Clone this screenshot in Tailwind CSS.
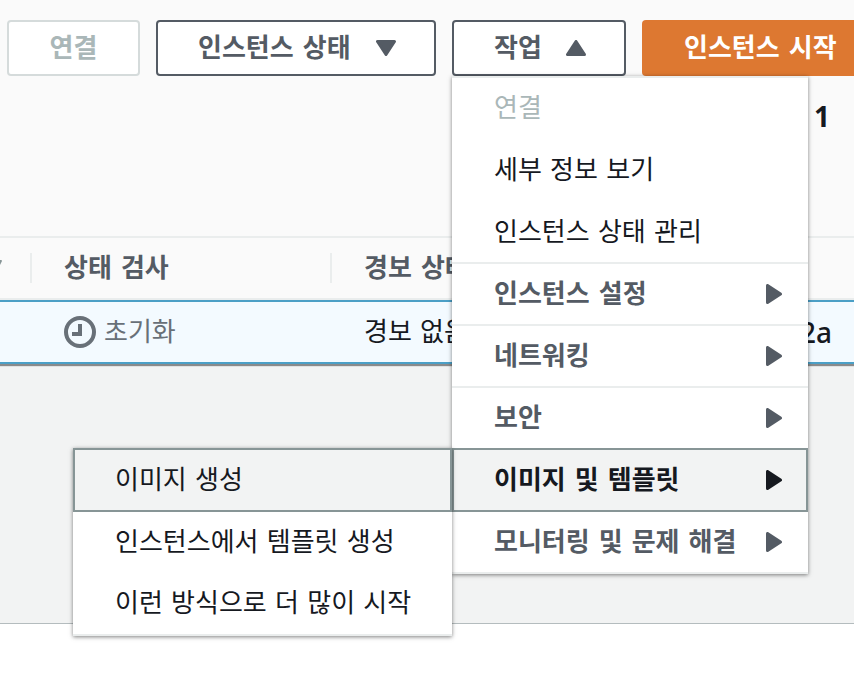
<!DOCTYPE html>
<html lang="ko">
<head>
<meta charset="utf-8">
<title>인스턴스</title>
<script src="https://cdn.jsdelivr.net/npm/@tailwindcss/browser@4"></script>
</head>
<body class="min-h-screen overflow-hidden bg-white font-['DejaVu_Sans','Noto_Sans_CJK_KR',sans-serif] text-[26px] leading-8 text-[#16191f]">
<svg class="hidden">
  <symbol id="down" viewBox="0 0 20 16"><path d="M1.5 1.5h17L10 14.5z" fill="currentColor" stroke="currentColor" stroke-width="3" stroke-linejoin="round"/></symbol>
  <symbol id="up" viewBox="0 0 20 16"><path d="M1.5 14.5h17L10 1.5z" fill="currentColor" stroke="currentColor" stroke-width="3" stroke-linejoin="round"/></symbol>
  <symbol id="right" viewBox="0 0 16 20"><path d="M1.5 1.5v17L14.5 10z" fill="currentColor" stroke="currentColor" stroke-width="3" stroke-linejoin="round"/></symbol>
</svg>
<main class="border-b border-[#b4bcbe] bg-[#f2f3f3] pb-[259px]">
  <section class="bg-[#fafafa] shadow-[0_2px_1px_#8a8a8a]">
    <header class="h-[236px] pt-5">
      <div class="flex gap-4 pl-[7px] font-bold whitespace-nowrap text-[#545b64]">
        <button disabled class="h-14 w-[133px] shrink-0 rounded border-2 border-[#d5dbdb] bg-white text-[#aab7b8]">연결</button>
        <button class="flex h-14 w-[280px] shrink-0 items-center justify-between rounded border-2 border-[#545b64] bg-white pr-[38px] pl-10">인스턴스 상태 <svg class="h-4 w-5"><use href="#down"/></svg></button>
        <div class="relative shrink-0">
          <button aria-expanded="true" class="flex h-14 w-[174px] items-center justify-between rounded border-2 border-[#545b64] bg-white pr-[38px] pl-10">작업 <svg class="h-4 w-5"><use href="#up"/></svg></button>
          <ul class="absolute top-full left-0 z-10 w-[356px] border-t-2 border-[#eaeded] bg-white shadow-[0_1px_4px_#00000080]">
            <li class="-mt-0.5"><button disabled class="h-16 w-full px-[42px] text-left font-normal text-[#aab7b8]">연결</button></li>
            <li class="-mt-0.5"><button class="h-16 w-full px-[42px] text-left font-normal text-[#16191f]">세부 정보 보기</button></li>
            <li class="-mt-0.5"><button class="h-16 w-full px-[42px] text-left font-normal text-[#16191f]">인스턴스 상태 관리</button></li>
            <li class="-mt-0.5 border-t-2 border-[#eaeded]"><button class="flex h-[62px] w-full items-center justify-between pr-[26px] pb-0.5 pl-[42px]">인스턴스 설정 <svg class="h-5 w-4"><use href="#right"/></svg></button></li>
            <li class="-mt-0.5 border-t-2 border-[#eaeded]"><button class="flex h-[62px] w-full items-center justify-between pr-[26px] pb-0.5 pl-[42px]">네트워킹 <svg class="h-5 w-4"><use href="#right"/></svg></button></li>
            <li class="-mt-0.5 border-t-2 border-[#eaeded]"><button class="flex h-[62px] w-full items-center justify-between pr-[26px] pb-0.5 pl-[42px]">보안 <svg class="h-5 w-4"><use href="#right"/></svg></button></li>
            <li class="relative -mt-0.5">
              <button aria-expanded="true" class="flex h-16 w-full items-center justify-between border-2 border-[#879596] bg-[#f2f3f3] pr-6 pl-10 text-[#16191f]">이미지 및 템플릿 <svg class="h-5 w-4"><use href="#right"/></svg></button>
              <ul class="absolute top-0 right-full w-[379px] border-b-2 border-[#eaeded] bg-white font-normal text-[#16191f] shadow-[0_1px_4px_#00000080]">
                <li><button class="h-16 w-full border-2 border-[#879596] bg-[#f2f3f3] px-10 text-left">이미지 생성</button></li>
                <li class="-mt-0.5"><button class="h-16 w-full px-[42px] text-left">인스턴스에서 템플릿 생성</button></li>
                <li class="-mt-0.5"><button class="h-[62px] w-full px-[42px] text-left">이런 방식으로 더 많이 시작</button></li>
              </ul>
            </li>
            <li class="border-b-2 border-[#eaeded]"><button class="flex h-[60px] w-full items-center justify-between pr-[26px] pl-[42px]">모니터링 및 문제 해결 <svg class="h-5 w-4"><use href="#right"/></svg></button></li>
          </ul>
        </div>
        <button class="h-14 shrink-0 rounded bg-[#dd7831] px-[42px] text-white">인스턴스 시작</button>
      </div>
      <nav class="flex justify-end pt-6 pr-6"><a href="#" class="font-['Noto_Sans',sans-serif] text-[28px] font-bold">1</a></nav>
    </header>
    <table class="w-full table-fixed border-separate border-spacing-0 text-left whitespace-nowrap">
      <thead class="text-[#545b64]">
        <tr class="h-16 *:border-y-2 *:border-[#eaeded]">
          <th class="w-8 p-0"><div class="flex h-[30px] justify-between border-r-2 border-[#eaeded]"><svg class="mt-1.5 h-4 w-1" viewBox="0 0 4 16"><path d="M0 1h1q1 0 1 1L0 6z" fill="#879596"/></svg></div></th>
          <th class="w-[300px] p-0"><div class="flex h-[30px] items-center border-r-2 border-[#eaeded] pl-8">상태 검사</div></th>
          <th class="p-0 pl-8">경보 상태</th>
          <th class="w-[54px] p-0"></th>
        </tr>
      </thead>
      <tbody>
        <tr class="h-16 bg-[#f3faff] *:border-y-2 *:border-[#4b9fc6]">
          <td class="p-0"></td>
          <td class="p-0 pl-8 text-[#687078]"><div class="flex items-center gap-2"><svg class="size-8" viewBox="0 0 32 32" fill="none" stroke="currentColor" stroke-width="4"><circle cx="16" cy="16" r="14"/><path d="M16 8v10H8"/></svg>초기화</div></td>
          <td class="p-0 pl-8">경보 없음</td>
          <td class="p-0 font-['Noto_Sans',sans-serif] text-[28px] font-medium">2a</td>
        </tr>
      </tbody>
    </table>
  </section>
</main>
</body>
</html>
